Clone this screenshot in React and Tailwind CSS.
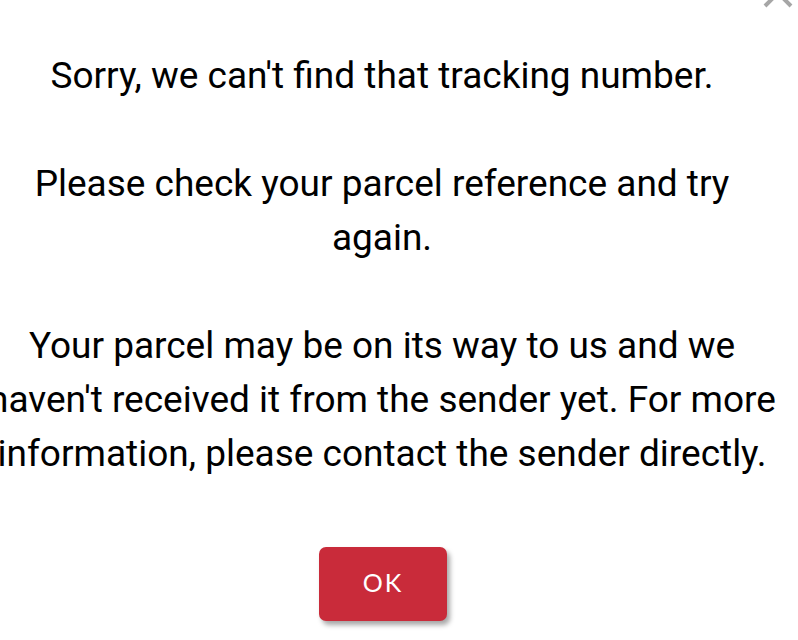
export default function App() {
  return (
    <main className="relative min-h-screen w-[798px] h-[640px] overflow-hidden bg-white font-['Roboto',sans-serif]">
      <button
        aria-label="Close"
        className="absolute right-[5px] top-[-22px] h-[30px] w-[30px] text-[#a6a6a6]"
      >
        <svg viewBox="0 0 30 30" width="30" height="30">
          <path d="M2 2L28 28M28 2L2 28" stroke="currentColor" strokeWidth="4" />
        </svg>
      </button>

      <section className="ml-[-13px] w-[790px] pt-[49px] text-center text-[37px] leading-[54px] text-black">
        <p>Sorry, we can't find that tracking number.</p>
        <p className="mt-[54px]">Please check your parcel reference and try again.</p>
        <p className="mt-[54px]">
          Your parcel may be on its way to us and we haven't received it from the sender yet. For more information,
          please contact the sender directly.
        </p>
        <div className="mt-[66px] flex justify-center">
          <button className="ml-[2px] h-[74px] w-[128px] rounded-[7px] bg-[#c92b3a] pb-[3px] font-['Lato',sans-serif] text-[25px] leading-none tracking-[2px] text-white shadow-[3px_4px_5px_rgba(0,0,0,0.35)]">
            OK
          </button>
        </div>
      </section>
    </main>
  );
}
